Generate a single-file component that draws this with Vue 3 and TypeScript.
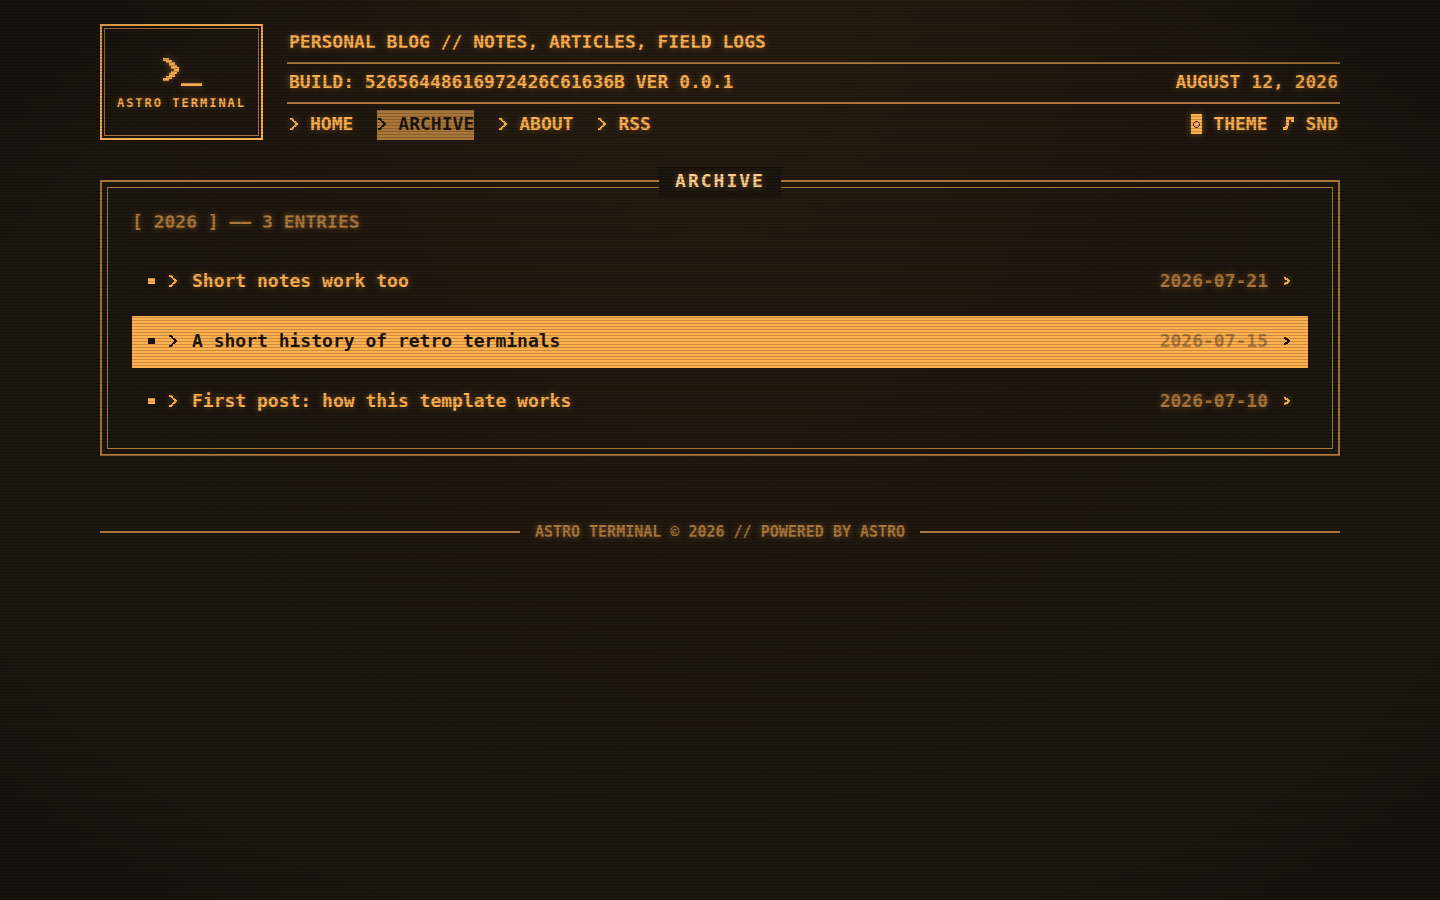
<script setup lang="ts">
interface NavItem {
  label: string
  active?: boolean
}
interface Entry {
  title: string
  date: string
  selected?: boolean
}

const nav: NavItem[] = [
  { label: 'HOME' },
  { label: 'ARCHIVE', active: true },
  { label: 'ABOUT' },
  { label: 'RSS' },
]

const entries: Entry[] = [
  { title: 'Short notes work too', date: '2026-07-21' },
  { title: 'A short history of retro terminals', date: '2026-07-15', selected: true },
  { title: 'First post: how this template works', date: '2026-07-10' },
]

const chevron = 'M1 0h3v1h1v2h2v1h1v1h1v2H8v1H7v1H5v2H4v1H1v-2h2V9h1V8h1V7h1V5H5V4H4V3H3V2H1z'
</script>

<template>
  <div class="screen">
    <div class="page">
      <header class="top">
        <a class="logo" href="#">
          <span class="logo-inner">
            <svg class="prompt" width="42" height="30" viewBox="0 0 42 30" shape-rendering="crispEdges" aria-hidden="true">
              <path d="M2 0h6v2h3v2h3v3h2v2h2v5h-2v2h-2v3h-3v2H8v2H2v-3h3v-2h3v-3h2v-2h3v-2h-3V8H8V5H5V3H2z" />
              <path d="M20 25h21v3h-21z" />
            </svg>
            <span class="logo-name">ASTRO TERMINAL</span>
          </span>
        </a>
        <div class="info">
          <div class="row">PERSONAL BLOG // NOTES, ARTICLES, FIELD LOGS</div>
          <div class="row">
            <span>BUILD: 52656448616972426C61636B VER 0.0.1</span>
            <time datetime="2026-08-12">AUGUST 12, 2026</time>
          </div>
          <div class="row controls">
            <nav class="nav">
              <a v-for="item in nav" :key="item.label" href="#" :class="{ active: item.active }"><svg class="icon" width="10" height="12" viewBox="0 0 10 12" aria-hidden="true"><path :d="chevron" /></svg>{{ item.label }}</a>
            </nav>
            <div class="tools">
              <button type="button">
                <svg class="icon" width="11" height="20" viewBox="0 0 11 20" aria-hidden="true">
                  <path d="M0 0h11v20H0z" />
                  <path class="cut" d="M4.500 7.500h2l2 2v2l-2 2h-2l-2-2v-2z" />
                </svg>
                THEME
              </button>
              <button type="button">
                <svg class="icon" width="11" height="14" viewBox="0 0 11 14" aria-hidden="true">
                  <path d="M3 0h8v5H8V3H6v6H5v3H4v1H0v-3h2V9h1z" />
                </svg>
                SND
              </button>
            </div>
          </div>
        </div>
      </header>

      <main class="panel">
        <h1>ARCHIVE</h1>
        <div class="panel-inner">
          <h2>[ 2026 ] —— 3 ENTRIES</h2>
          <ul>
            <li v-for="entry in entries" :key="entry.title">
              <a href="#" class="entry" :class="{ selected: entry.selected }">
                <span class="bullet"></span>
                <svg class="icon" width="10" height="12" viewBox="0 0 10 12" aria-hidden="true"><path :d="chevron" /></svg>
                <span class="title">{{ entry.title }}</span>
                <time :datetime="entry.date">{{ entry.date }}</time>
                <svg class="icon go" width="6" height="8" viewBox="0 0 6 8" aria-hidden="true"><path d="M0 0h2v1h2v1h1v1h1v2H5v1H4v1H2v1H0V6h1V5h2V3H1V2H0z" /></svg>
              </a>
            </li>
          </ul>
        </div>
      </main>

      <footer class="foot">ASTRO TERMINAL © 2026 // POWERED BY ASTRO</footer>
    </div>
  </div>
</template>

<style>
html,
body {
  background: #1a140f;
}
</style>

<style scoped>
.screen {
  --fg: #ffb150;
  --dim: #ab773a;
  --bg: #1d160f;
  position: relative;
  box-sizing: border-box;
  min-height: 100vh;
  padding: 24px 100px;
  background: radial-gradient(ellipse at 50% 0, #251b11 0%, #1d160f 65%);
  color: var(--fg);
  font: 700 18px/24px "DejaVu Sans Mono", "Liberation Mono", monospace;
  text-shadow: 0 0 6px rgba(255, 177, 80, 0.4);
}
/* scanlines and vignette */
.screen::after {
  content: "";
  position: absolute;
  inset: 0;
  pointer-events: none;
  background:
    repeating-linear-gradient(to bottom, transparent 0, transparent 2px, rgba(0, 0, 0, 0.22) 2px, rgba(0, 0, 0, 0.22) 3px),
    radial-gradient(ellipse at center, transparent 75%, rgba(0, 0, 0, 0.25) 100%);
}
a {
  color: inherit;
  text-decoration: none;
}
.top {
  display: flex;
  gap: 24px;
}
.logo {
  display: flex;
  flex: none;
  box-sizing: border-box;
  width: 163px;
  padding: 2px;
  border: 2px solid var(--fg);
}
.logo-inner {
  display: flex;
  flex: 1;
  flex-direction: column;
  align-items: center;
  justify-content: center;
  gap: 7px;
  padding-top: 5px;
  border: 1px solid var(--dim);
}
.prompt {
  fill: var(--fg);
  filter: drop-shadow(0 0 3px rgba(255, 177, 80, 0.4));
}
.logo-name {
  font-size: 12px;
  line-height: 16px;
  letter-spacing: 2px;
  white-space: nowrap;
}
.info {
  flex: 1;
  min-width: 0;
}
.row {
  display: flex;
  box-sizing: border-box;
  align-items: center;
  justify-content: space-between;
  height: 40px;
  padding: 0 2px 2px;
  border-bottom: 2px solid var(--dim);
}
.row.controls {
  height: 36px;
  padding: 6px 2px 0;
  border: 0;
}
.nav {
  display: flex;
  gap: 24px;
}
.nav a {
  display: flex;
  box-sizing: border-box;
  align-items: center;
  gap: 11px;
  height: 30px;
  padding-bottom: 2px;
}
.nav a.active {
  background: var(--dim);
  color: var(--bg);
  text-shadow: none;
}
.icon {
  flex: none;
  fill: currentColor;
}
.tools {
  display: flex;
  gap: 16px;
}
button {
  display: flex;
  align-items: center;
  gap: 11px;
  padding: 0 0 2px;
  border: 0;
  background: none;
  color: inherit;
  font: inherit;
  text-shadow: inherit;
}
.tools .icon,
.nav a:not(.active) .icon,
.entry:not(.selected) .icon {
  filter: drop-shadow(0 0 3px rgba(255, 177, 80, 0.4));
}
.cut {
  fill: none;
  stroke: var(--bg);
  stroke-width: 1;
}
.panel {
  position: relative;
  margin-top: 40px;
  padding: 5px;
  border: 2px solid var(--dim);
}
.panel h1 {
  position: absolute;
  top: -15px;
  left: 50%;
  margin: 0;
  padding: 0 16px 2px;
  transform: translateX(-50%);
  background: #1c150f;
  color: #ffd093;
  font-size: 18px;
  line-height: 28px;
  letter-spacing: 2px;
}
.panel-inner {
  padding: 22px 24px 20px;
  border: 1px solid var(--dim);
}
h2 {
  margin: 0 0 22px;
  color: var(--dim);
  font-size: 18px;
  line-height: 24px;
}
ul {
  display: grid;
  gap: 8px;
  margin: 0;
  padding: 0;
  list-style: none;
}
.entry {
  display: flex;
  box-sizing: border-box;
  align-items: center;
  height: 52px;
  padding: 0 16px 2px;
}
.entry.selected {
  background: var(--fg);
  color: var(--bg);
  text-shadow: none;
}
.bullet {
  width: 7px;
  height: 6px;
  margin-right: 13px;
  background: currentColor;
}
.title {
  flex: 1;
  margin-left: 14px;
}
.entry time {
  color: var(--dim);
}
.go {
  margin: 0 2px 0 16px;
}
.foot {
  display: flex;
  align-items: center;
  gap: 15px;
  margin-top: 64px;
  color: var(--dim);
  font-size: 15px;
  line-height: 24px;
  white-space: nowrap;
}
.foot::before,
.foot::after {
  content: "";
  flex: 1;
  height: 2px;
  background: var(--dim);
}
</style>
